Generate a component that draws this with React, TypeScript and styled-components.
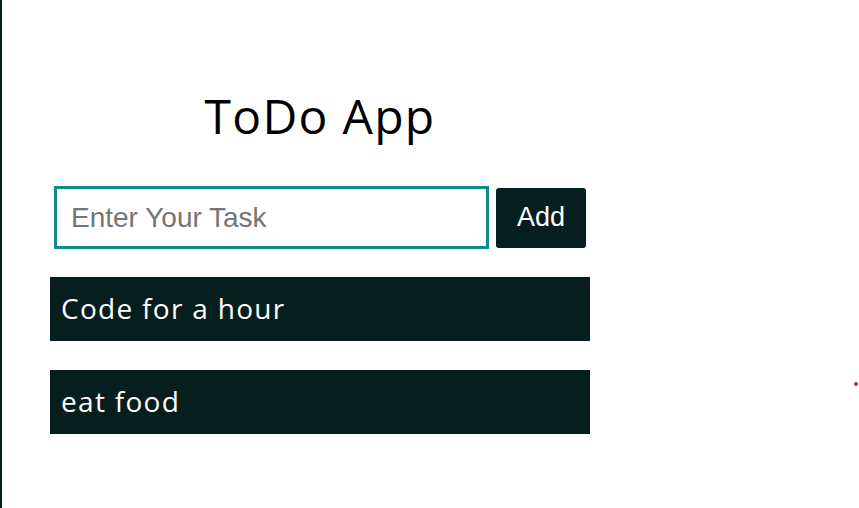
import React from "react";
import styled, { createGlobalStyle } from "styled-components";

const Global = createGlobalStyle`
  html, body { margin: 0; padding: 0; background: #ffffff; }
  body {
    min-height: 508px;
    border-left: 2px solid #0b1f21;
    box-sizing: border-box;
    font-family: "Open Sans", "Liberation Sans", sans-serif;
  }
`;

const Page = styled.div`
  position: relative;
  min-height: 508px;
  padding: 86px 0 0 48px;
  box-sizing: border-box;
`;

const Container = styled.div`
  width: 540px;
  display: flex;
  flex-direction: column;
`;

const Title = styled.h1`
  margin: 0;
  font-family: "Open Sans", sans-serif;
  font-weight: 400;
  font-size: 48px;
  line-height: 60px;
  letter-spacing: 1.3px;
  color: #000;
  text-align: center;
`;

const Form = styled.div`
  margin-top: 40px;
  display: flex;
  justify-content: center;
  align-items: center;
  gap: 7px;
`;

const Input = styled.input`
  width: 435px;
  height: 63px;
  box-sizing: border-box;
  border: 3px solid #138a8a;
  padding: 0 14px;
  font-family: "Liberation Sans", Arial, sans-serif;
  font-size: 28px;
  color: #222;
  outline: none;
  &::placeholder { color: #757575; }
`;

const AddButton = styled.button`
  width: 90px;
  height: 60px;
  border: none;
  border-radius: 3px;
  background: #071e1f;
  color: #fff;
  font-family: "Liberation Sans", Arial, sans-serif;
  font-size: 27px;
  cursor: pointer;
`;

const List = styled.div`
  margin-top: 28px;
  display: flex;
  flex-direction: column;
  gap: 29px;
`;

const Item = styled.div`
  height: 64px;
  box-sizing: border-box;
  background: #071e1f;
  color: #fff;
  display: flex;
  align-items: center;
  padding: 0 0 3px 11px;
  font-family: "Open Sans", sans-serif;
  font-size: 28px;
  letter-spacing: 1.3px;
`;

const Dot = styled.span`
  position: absolute;
  left: 852px;
  top: 382px;
  width: 4px;
  height: 4px;
  border-radius: 50%;
  background: #e02020;
`;

export default function App() {
  const tasks = ["Code for a hour", "eat food"];
  return (
    <>
      <Global />
      <Page>
        <Container>
          <Title>ToDo App</Title>
          <Form>
            <Input placeholder="Enter Your Task" />
            <AddButton>Add</AddButton>
          </Form>
          <List>
            {tasks.map((t) => (
              <Item key={t}>{t}</Item>
            ))}
          </List>
        </Container>
        <Dot />
      </Page>
    </>
  );
}
